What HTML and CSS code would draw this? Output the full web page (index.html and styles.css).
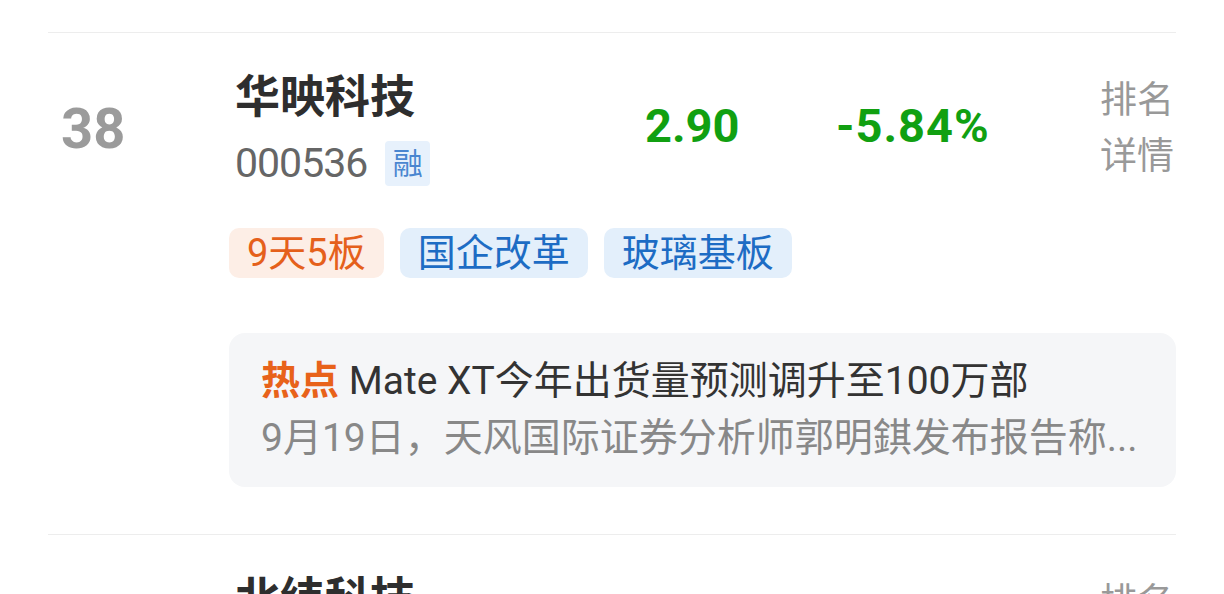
FILE: index.html
```html
<!DOCTYPE html>
<html lang="zh-CN">
<head>
    <meta charset="UTF-8">
    <meta name="viewport" content="width=device-width, initial-scale=1.0">
    <title>人气排行</title>
    <link rel="stylesheet" href="styles.css">
</head>
<body>
    <div class="list">
        <div class="stock">
            <div class="stock-main">
                <div class="rank">38</div>
                <div class="info">
                    <div class="name">华映科技</div>
                    <div class="code-row">
                        <span class="code">000536</span>
                        <span class="margin-tag">融</span>
                    </div>
                </div>
                <div class="price down">2.90</div>
                <div class="change down">-5.84%</div>
                <a class="detail" href="#">排名<br>详情</a>
            </div>
            <div class="tags">
                <span class="tag tag-hot">9天5板</span>
                <span class="tag">国企改革</span>
                <span class="tag">玻璃基板</span>
            </div>
            <div class="hot">
                <div class="hot-title"><b>热点</b> Mate XT今年出货量预测调升至100万部</div>
                <div class="hot-desc">9月19日，天风国际证券分析师郭明錤发布报告称...</div>
            </div>
        </div>

        <div class="stock">
            <div class="stock-main">
                <div class="rank">39</div>
                <div class="info">
                    <div class="name">北纬科技</div>
                    <div class="code-row">
                        <span class="code">002148</span>
                    </div>
                </div>
                <div class="price up">7.15</div>
                <div class="change up">+3.62%</div>
                <a class="detail" href="#">排名<br>详情</a>
            </div>
        </div>
    </div>
</body>
</html>
```

FILE: styles.css
```css
body {
    margin: 0;
    padding: 32px 48px 0;
    background-color: #fff;
    font-family: Roboto, "Noto Sans CJK SC", sans-serif;
    color: #333;
}

.stock {
    border-top: 1px solid #ededed;
    padding: 37px 0 47px;
}

.stock-main {
    display: flex;
    align-items: center;
}

.rank {
    width: 174px;
    padding-left: 13px;
    font-size: 56px;
    line-height: 56px;
    font-weight: bold;
    color: #9b9b9b;
}

.info {
    width: 410px;
}

.name {
    font-size: 45px;
    line-height: 56px;
    font-weight: bold;
    color: #2e2e2e;
    margin-bottom: 13px;
}

.code-row {
    display: flex;
    align-items: center;
    gap: 18px;
}

.code {
    font-size: 41px;
    line-height: 48px;
    letter-spacing: -1px;
    color: #666;
}

.margin-tag {
    width: 45px;
    height: 45px;
    border-radius: 4px;
    background-color: #e7f1fc;
    color: #4a86d0;
    font-size: 30px;
    line-height: 45px;
    text-align: center;
}

.price, .change {
    font-size: 47px;
    font-weight: bold;
    line-height: 56px;
    margin-top: -6px;
}

.price {
    width: 191px;
}

.change {
    flex: 1;
    letter-spacing: 1px;
}

.down {
    color: #11a011;
}

.up {
    color: #e93030;
}

.detail {
    font-size: 37px;
    line-height: 56px;
    color: #999;
    text-decoration: none;
    margin-right: 2px;
}

.tags {
    display: flex;
    gap: 16px;
    margin: 41px 0 0 181px;
}

.tag {
    height: 50px;
    line-height: 50px;
    padding: 0 18px;
    border-radius: 10px;
    font-size: 38px;
    background-color: #e3effb;
    color: #1d6cc4;
}

.tag-hot {
    background-color: #fdeee6;
    color: #e5601b;
}

.hot {
    margin: 55px 0 0 181px;
    padding: 20px 32px;
    border-radius: 16px;
    background-color: #f5f6f8;
    font-size: 39px;
    line-height: 57px;
}

.hot-title {
    color: #333;
    white-space: nowrap;
}

.hot-title b {
    color: #e8621a;
}

.hot-desc {
    color: #888;
    white-space: nowrap;
    overflow: hidden;
}
```
